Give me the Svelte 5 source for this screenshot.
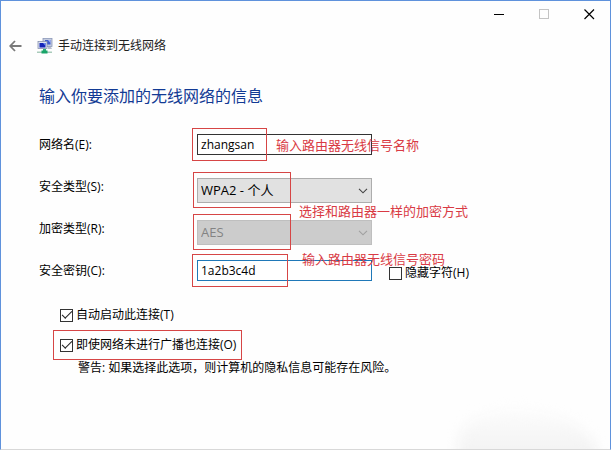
<script>
  let networkName = 'zhangsan';
  let security = 'WPA2 - 个人';
  let encryption = 'AES';
  let key = '1a2b3c4d';
  let hideChars = false;
  let autoStart = true;
  let connectHidden = true;
</script>

<div class="window">
  <div class="smudge"></div>

  <div class="titlebar">
    <button type="button" aria-label="最小化">
      <svg width="11" height="11" viewBox="0 0 11 11" shape-rendering="crispEdges">
        <rect x="0" y="5" width="10" height="1" fill="#000" />
      </svg>
    </button>
    <button type="button" aria-label="最大化" disabled>
      <svg width="11" height="11" viewBox="0 0 11 11">
        <rect x="0.5" y="0.5" width="9" height="9" fill="none" stroke="#c4c4c4" />
      </svg>
    </button>
    <button type="button" aria-label="关闭">
      <svg width="11" height="11" viewBox="0 0 11 11">
        <path d="M0.5 0.5L10 10M10 0.5L0.5 10" stroke="#000" stroke-width="1.2" />
      </svg>
    </button>
  </div>

  <header>
    <button type="button" class="back" aria-label="后退">
      <svg width="13" height="12" viewBox="0 0 13 12" fill="none" stroke="#7a7a7a" stroke-width="1.8">
        <path d="M12.5 6H1.5M6 1L1.2 6L6 11" />
      </svg>
    </button>
    <svg class="net" width="16" height="16" viewBox="0 0 16 16">
      <rect x="6" y="0.5" width="9" height="8" fill="#c3cbe0" stroke="#8c98b8" stroke-width="0.8" />
      <rect x="8" y="2" width="5.5" height="4.5" fill="#3f5bd0" />
      <path d="M11 2h2.5v3z" fill="#a9bcf4" />
      <path d="M11 9h3l1 2h-4z" fill="#b8bfce" />
      <rect x="1" y="3.5" width="9" height="7" fill="#dfe4f0" stroke="#8591b0" stroke-width="0.8" />
      <rect x="2.5" y="5" width="6" height="4.5" fill="#1424b8" />
      <path d="M6 5h2.5v3z" fill="#6f8df0" />
      <rect x="6" y="11" width="3" height="2" fill="#2fae78" />
      <rect x="0" y="13.5" width="15" height="1.5" fill="#a9cbbb" />
      <rect x="4.5" y="12.5" width="6" height="3" fill="#18a468" />
    </svg>
    <span>手动连接到无线网络</span>
  </header>

  <main>
    <h1>输入你要添加的无线网络的信息</h1>

    <form>
      <div class="row">
        <label for="name">网络名(E):</label>
        <div class="field">
          <input id="name" type="text" class="text" bind:value={networkName} />
          <div class="mark narrow"></div>
          <span class="note level">输入路由器无线信号名称</span>
        </div>
      </div>

      <div class="row">
        <label for="security">安全类型(S):</label>
        <div class="field drop">
          <select id="security" bind:value={security}>
            <option>WPA2 - 个人</option>
          </select>
          <svg class="chevron" width="10" height="6" viewBox="0 0 10 6">
            <path d="M1 0.8L5 4.8L9 0.8" fill="none" stroke="#444" stroke-width="1.1" />
          </svg>
          <div class="mark wide"></div>
          <span class="note below">选择和路由器一样的加密方式</span>
        </div>
      </div>

      <div class="row">
        <label for="encryption">加密类型(R):</label>
        <div class="field drop">
          <select id="encryption" bind:value={encryption} disabled>
            <option>AES</option>
          </select>
          <svg class="chevron" width="10" height="6" viewBox="0 0 10 6">
            <path d="M1 0.8L5 4.8L9 0.8" fill="none" stroke="#a0a0a0" stroke-width="1.1" />
          </svg>
          <div class="mark wide"></div>
        </div>
      </div>

      <div class="row">
        <label for="key">安全密钥(C):</label>
        <div class="field">
          <input id="key" type="text" class="text focused" bind:value={key} />
          <div class="mark medium"></div>
          <span class="note above">输入路由器无线信号密码</span>
        </div>
        <label class="check hide">
          <input type="checkbox" bind:checked={hideChars} />隐藏字符(H)
        </label>
      </div>

      <div class="options">
        <div class="option">
          <label class="check"><input type="checkbox" bind:checked={autoStart} />自动启动此连接(T)</label>
        </div>
        <div class="option">
          <label class="check"><input type="checkbox" bind:checked={connectHidden} />即使网络未进行广播也连接(O)</label>
          <div class="mark around"></div>
        </div>
        <p>警告: 如果选择此选项，则计算机的隐私信息可能存在风险。</p>
      </div>
    </form>
  </main>
</div>

<style>
  :global(body) {
    background: #fff;
  }

  .window {
    position: relative;
    box-sizing: border-box;
    min-height: 100vh;
    overflow: hidden;
    border: 1px solid #5f92dc;
    border-bottom-color: #d8d8d8;
    background: #fefefe;
    color: #000;
    font-family: "Open Sans", "Noto Sans CJK SC", sans-serif;
    font-size: 12px;
    line-height: 16px;
  }

  button {
    display: flex;
    align-items: center;
    justify-content: center;
    padding: 0;
    border: 0;
    background: transparent;
  }

  .titlebar {
    display: flex;
    justify-content: flex-end;
  }

  .titlebar button {
    width: 45px;
    height: 26px;
    padding-left: 3px;
  }

  header {
    display: flex;
    align-items: center;
    height: 38px;
    padding-left: 8px;
    color: #222;
  }

  .net {
    margin: 0 5px 0 15px;
  }

  main {
    padding: 19px 38px;
  }

  h1 {
    margin: 0 0 15px;
    color: #123a94;
    font-size: 16px;
    font-weight: 400;
    line-height: 24px;
  }

  .row {
    display: flex;
    align-items: center;
    height: 42px;
  }

  .row > label:first-child {
    width: 158px;
    padding-top: 2px;
  }

  .field {
    position: relative;
    width: 175px;
  }

  .drop {
    padding-top: 8px;
  }

  .text,
  select {
    display: block;
    box-sizing: border-box;
    width: 100%;
    margin: 0;
    border-radius: 0;
    outline: none;
    color: #000;
    font-family: inherit;
  }

  .text {
    height: 21px;
    padding: 0 3px;
    border: 1px solid #333;
    background: #fff;
    font-size: 12px;
  }

  .text.focused {
    border-color: #1f78b8;
  }

  select {
    appearance: none;
    height: 25px;
    padding: 0 3px;
    border: 1px solid #adadad;
    background: #e1e1e1;
    font-size: 13px;
  }

  select:disabled {
    border-color: #bfbfbf;
    background: #ccc;
    color: #838383;
    opacity: 1;
  }

  .chevron {
    position: absolute;
    right: 4px;
    bottom: 9px;
    pointer-events: none;
  }

  .mark {
    position: absolute;
    top: -6px;
    bottom: -6px;
    left: -5px;
    border: 1px solid #d64545;
    pointer-events: none;
  }

  .narrow {
    width: 73px;
  }

  .medium {
    width: 94px;
  }

  .wide {
    top: 2px;
    bottom: -5px;
    left: -4px;
    width: 96px;
  }

  .around {
    top: 0;
    bottom: 0;
    left: -7px;
    right: -6px;
  }

  .note {
    position: absolute;
    color: #d93a44;
    font-size: 13px;
    line-height: 14px;
    white-space: nowrap;
    pointer-events: none;
  }

  .level {
    top: 4px;
    left: 79px;
  }

  .below {
    top: 34px;
    left: 102px;
  }

  .above {
    top: -8px;
    left: 105px;
  }

  .check {
    display: flex;
    align-items: center;
    gap: 3px;
  }

  .check input {
    appearance: none;
    display: grid;
    place-items: center;
    box-sizing: border-box;
    width: 13px;
    height: 13px;
    margin: 0;
    border: 1px solid #333;
    background: #fff;
  }

  .check input:checked::before {
    content: "";
    box-sizing: border-box;
    width: 10px;
    height: 5px;
    margin-bottom: 3px;
    border: solid #222;
    border-width: 0 0 1px 1px;
    transform: rotate(-45deg);
  }

  .hide {
    padding-top: 6px;
    margin-left: 17px;
  }

  .options {
    padding: 9px 0 0 21px;
  }

  .option {
    position: relative;
    display: flex;
    align-items: center;
    width: fit-content;
    height: 30px;
  }

  p {
    margin: 0 0 0 18px;
  }

  .smudge {
    position: absolute;
    right: 12px;
    bottom: -40px;
    width: 140px;
    height: 80px;
    border-radius: 40% 60% 0 0;
    background: linear-gradient(#fcfcfc, #f2f2f2 60%);
    filter: blur(6px);
    pointer-events: none;
  }
</style>
